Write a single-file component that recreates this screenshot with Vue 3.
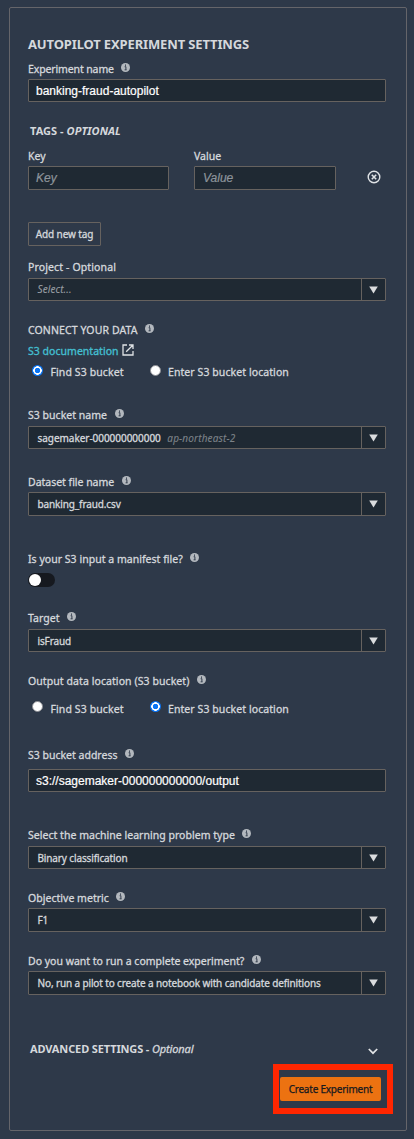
<script setup>
import { ref } from 'vue'

const experimentName = ref('banking-fraud-autopilot')
const bucketAddress = ref('s3://sagemaker-000000000000/output')
const inputMode = ref('find')
const outputMode = ref('enter')
const modes = [
  { id: 'find', label: 'Find S3 bucket' },
  { id: 'enter', label: 'Enter S3 bucket location' },
]
</script>

<template>
  <svg class="defs" aria-hidden="true">
    <symbol id="info" viewBox="0 0 9 9">
      <circle cx="4.5" cy="4.5" r="4.5" fill="#b3b8be" />
      <path d="M3.7 3.7H4.9V6.6M3.6 6.8H5.6M4.5 1.5V2.8" stroke="#2e3949" stroke-width="1" fill="none" />
    </symbol>
    <symbol id="caret" viewBox="0 0 9 8">
      <path d="M0.2 0.6H8.8L4.5 7.4Z" fill="#dadcde" />
    </symbol>
  </svg>

  <main class="panel">
    <h1 class="title">AUTOPILOT EXPERIMENT SETTINGS</h1>

    <div class="label exp-label"><span>Experiment name</span><svg class="info"><use href="#info" /></svg></div>
    <div class="box field-input g2">{{ experimentName }}</div>

    <h2 class="section tags">TAGS - <em>OPTIONAL</em></h2>
    <div class="tag-row">
      <div class="tag-key">
        <div class="label">Key</div>
        <div class="box field-input tall placeholder g2">Key</div>
      </div>
      <div class="tag-value">
        <div class="label">Value</div>
        <div class="box field-input tall placeholder g2">Value</div>
      </div>
      <svg class="remove" viewBox="0 0 14 14">
        <circle cx="7" cy="7" r="5.8" fill="none" stroke="#dfe2e5" stroke-width="1.4" />
        <path d="M4.8 4.8L9.2 9.2M9.2 4.8L4.8 9.2" stroke="#dfe2e5" stroke-width="1.6" />
      </svg>
    </div>
    <button class="add-tag">Add new tag</button>

    <div class="label project-label">Project - Optional</div>
    <div class="box select g3">
      <span class="value hint">Select...</span>
      <span class="arrow"><svg><use href="#caret" /></svg></span>
    </div>

    <div class="label connect-label"><span>CONNECT YOUR DATA</span><svg class="info"><use href="#info" /></svg></div>
    <div class="label link-row">
      <a class="link">S3 documentation</a>
      <svg class="external" viewBox="0 0 12 12">
        <path d="M5 1H1V11H11V7M7 1H11V5M11 1L4.2 7.8" fill="none" stroke="#dfe2e5" stroke-width="1.3" />
      </svg>
    </div>
    <div class="radios input-radios">
      <label v-for="m in modes" :key="m.id" class="radio" :class="m.id">
        <i class="dot" :class="{ on: inputMode === m.id }"></i><span>{{ m.label }}</span>
      </label>
    </div>

    <div class="label bucket-label"><span>S3 bucket name</span><svg class="info"><use href="#info" /></svg></div>
    <div class="box select low g3">
      <span class="value bucket">sagemaker-000000000000 <em class="region">ap-northeast-2</em></span>
      <span class="arrow"><svg><use href="#caret" /></svg></span>
    </div>

    <div class="label dataset-label"><span>Dataset file name</span><svg class="info"><use href="#info" /></svg></div>
    <div class="box select tall g2">
      <span class="value">banking_fraud.csv</span>
      <span class="arrow"><svg><use href="#caret" /></svg></span>
    </div>

    <div class="label manifest-label"><span>Is your S3 input a manifest file?</span><svg class="info"><use href="#info" /></svg></div>
    <div class="toggle"><i></i></div>

    <div class="label target-label"><span>Target</span><svg class="info"><use href="#info" /></svg></div>
    <div class="box select low g3">
      <span class="value">isFraud</span>
      <span class="arrow"><svg><use href="#caret" /></svg></span>
    </div>

    <div class="label output-label"><span>Output data location (S3 bucket)</span><svg class="info"><use href="#info" /></svg></div>
    <div class="radios output-radios">
      <label v-for="m in modes" :key="m.id" class="radio" :class="m.id">
        <i class="dot" :class="{ on: outputMode === m.id }"></i><span>{{ m.label }}</span>
      </label>
    </div>

    <div class="label address-label"><span>S3 bucket address</span><svg class="info"><use href="#info" /></svg></div>
    <div class="box field-input address">{{ bucketAddress }}</div>

    <div class="label problem-label"><span>Select the machine learning problem type</span><svg class="info"><use href="#info" /></svg></div>
    <div class="box select low g3">
      <span class="value">Binary classification</span>
      <span class="arrow"><svg><use href="#caret" /></svg></span>
    </div>

    <div class="label metric-label"><span>Objective metric</span><svg class="info"><use href="#info" /></svg></div>
    <div class="box select tall g2">
      <span class="value">F1</span>
      <span class="arrow"><svg><use href="#caret" /></svg></span>
    </div>

    <div class="label complete-label"><span>Do you want to run a complete experiment?</span><svg class="info"><use href="#info" /></svg></div>
    <div class="box select tall g2">
      <span class="value">No, run a pilot to create a notebook with candidate definitions</span>
      <span class="arrow"><svg><use href="#caret" /></svg></span>
    </div>

    <div class="advanced">
      <h2 class="section advanced-title">ADVANCED SETTINGS - <em class="light">Optional</em></h2>
      <svg class="chevron" viewBox="0 0 10 7">
        <path d="M0.8 1L5 5.2L9.2 1" fill="none" stroke="#e2e4e6" stroke-width="1.7" />
      </svg>
    </div>

    <div class="highlight"><button class="create">Create Experiment</button></div>
  </main>
</template>

<style>
body {
  background: #2e3949;
}
</style>

<style scoped>
* {
  box-sizing: border-box;
}
.defs {
  position: absolute;
  width: 0;
  height: 0;
}
.panel {
  width: 398px;
  height: 1124px;
  margin: 7px 0 0 9px;
  padding: 27px 20px 0 18px;
  border: 1px solid #65656a;
  border-radius: 2px;
  font-family: "Noto Sans", "Open Sans", sans-serif;
  font-size: 11px;
  color: #d5d8dc;
  display: flow-root;
  white-space: nowrap;
}
.title {
  margin: 0;
  font-size: 13px;
  line-height: 18px;
  font-weight: 700;
  letter-spacing: -0.14px;
}
.label {
  display: flex;
  height: 16px;
  line-height: 16px;
  font-size: 10.5px;
  letter-spacing: 0.03px;
  -webkit-text-stroke: 0.3px currentColor;
}
.info {
  width: 9px;
  height: 9px;
  margin: 2px 0 0 7.5px;
}
.section {
  margin: 0;
  height: 16px;
  line-height: 16px;
  font-size: 11px;
  font-weight: 700;
  padding-left: 2px;
  letter-spacing: 0.05px;
}
.advanced-title {
  letter-spacing: -0.13px;
}
.light {
  font-weight: 400;
  -webkit-text-stroke: 0.3px currentColor;
}
.box {
  display: flex;
  height: 23px;
  border: 1px solid #66625f;
  border-radius: 1px;
  background: #1f2933;
}
.tall {
  height: 24px;
}
.field-input {
  align-items: center;
  padding-left: 7px;
  font-family: "Liberation Sans", Arial, sans-serif;
  font-size: 12px;
  letter-spacing: 0;
  color: #fff;
  -webkit-text-stroke: 0.2px currentColor;
}
.placeholder {
  font-style: italic;
  color: #8d949b;
}
.g2 {
  margin-top: 2px;
}
.g3 {
  margin-top: 3px;
}
.exp-label {
  margin-top: 8px;
  letter-spacing: -0.12px;
}
.tags {
  margin-top: 21px;
}
.tag-row {
  display: flex;
  margin-top: 9px;
}
.tag-key {
  width: 141px;
}
.tag-value {
  width: 142px;
  margin-left: 25px;
}
.tag-value .placeholder {
  padding-left: 8px;
}
.remove {
  width: 14px;
  height: 14px;
  margin: 22px 0 0 31px;
}
.add-tag {
  display: block;
  width: 73px;
  height: 24px;
  margin-top: 32px;
  padding: 0;
  border: 1px solid #66625f;
  border-radius: 1px;
  background: none;
  font: 400 10px "Noto Sans", sans-serif;
  letter-spacing: -0.12px;
  -webkit-text-stroke: 0.3px currentColor;
  color: #d5d8dc;
}
.value {
  flex: 1;
  padding-left: 8.5px;
  line-height: 21px;
  font-size: 10px;
  letter-spacing: -0.13px;
  -webkit-text-stroke: 0.3px currentColor;
}
.bucket {
  letter-spacing: -0.04px;
}
.tall .value {
  line-height: 22px;
}
.low .value {
  line-height: 23px;
}
.hint {
  font-style: italic;
  letter-spacing: 0.1px;
  color: #989da2;
  -webkit-text-stroke: 0.1px currentColor;
}
.region {
  margin-left: 4px;
  letter-spacing: 0.15px;
  color: #7c8288;
  -webkit-text-stroke: 0.1px currentColor;
}
.arrow {
  display: flex;
  align-items: center;
  justify-content: center;
  width: 24px;
  border-left: 1px solid #66625f;
}
.arrow svg {
  width: 9px;
  height: 8px;
}
.project-label {
  margin-top: 13px;
  letter-spacing: 0.13px;
}
.connect-label,
.output-label,
.metric-label,
.complete-label {
  margin-top: 21px;
}
.connect-label {
  letter-spacing: 0.11px;
}
.output-label {
  letter-spacing: 0.08px;
}
.complete-label {
  letter-spacing: 0;
}
.link-row {
  margin-top: 5px;
}
.link {
  color: #44c0d3;
}
.external {
  width: 12px;
  height: 12px;
  margin: 1px 0 0 3px;
}
.radios {
  display: flex;
  height: 16px;
  line-height: 16px;
  font-size: 10.5px;
  letter-spacing: 0.1px;
  -webkit-text-stroke: 0.3px currentColor;
}
.radio {
  display: flex;
  padding-left: 4px;
}
.radio.find {
  width: 118px;
}
.radio.enter {
  letter-spacing: 0.08px;
}
.dot {
  width: 11px;
  height: 11px;
  margin: 1px 7.5px 0 0;
  border-radius: 50%;
  background: #fff;
  border: 1px solid #8b8d92;
}
.enter .dot {
  margin-right: 7px;
}
.dot.on {
  border: 0;
  background: radial-gradient(circle, #0a75f5 0 2.5px, #fff 3px 4px, #0a75f5 4.5px);
}
.input-radios {
  margin-top: 5px;
}
.output-radios {
  margin-top: 12px;
}
.output-radios .dot {
  margin-top: 0;
}
.bucket-label {
  margin-top: 27px;
}
.dataset-label {
  margin-top: 25px;
  letter-spacing: -0.02px;
}
.manifest-label {
  margin-top: 35px;
}
.toggle {
  width: 27px;
  height: 14px;
  margin-top: 6px;
  padding: 1px;
  border-radius: 7px;
  background: #16191f;
}
.toggle i {
  display: block;
  width: 12px;
  height: 12px;
  border-radius: 50%;
  background: #fff;
}
.target-label {
  margin-top: 23px;
}
.address-label {
  margin-top: 30px;
  letter-spacing: 0;
}
.address {
  margin-top: 6px;
}
.problem-label {
  margin-top: 35px;
}
.advanced {
  display: flex;
  justify-content: space-between;
  margin-top: 46px;
}
.chevron {
  width: 10px;
  height: 7px;
  margin: 7px 8px 0 0;
}
.highlight {
  width: 120px;
  height: 50px;
  margin: 7px 0 0 245px;
  padding: 7px 0 0 1px;
  border: 6px solid #ff2600;
}
.create {
  display: block;
  width: 101px;
  height: 24px;
  padding: 0;
  border: 0;
  border-radius: 2px;
  background: #ec7211;
  font: 400 10px "Noto Sans", sans-serif;
  letter-spacing: -0.22px;
  -webkit-text-stroke: 0.25px currentColor;
  color: #16191f;
}
</style>
